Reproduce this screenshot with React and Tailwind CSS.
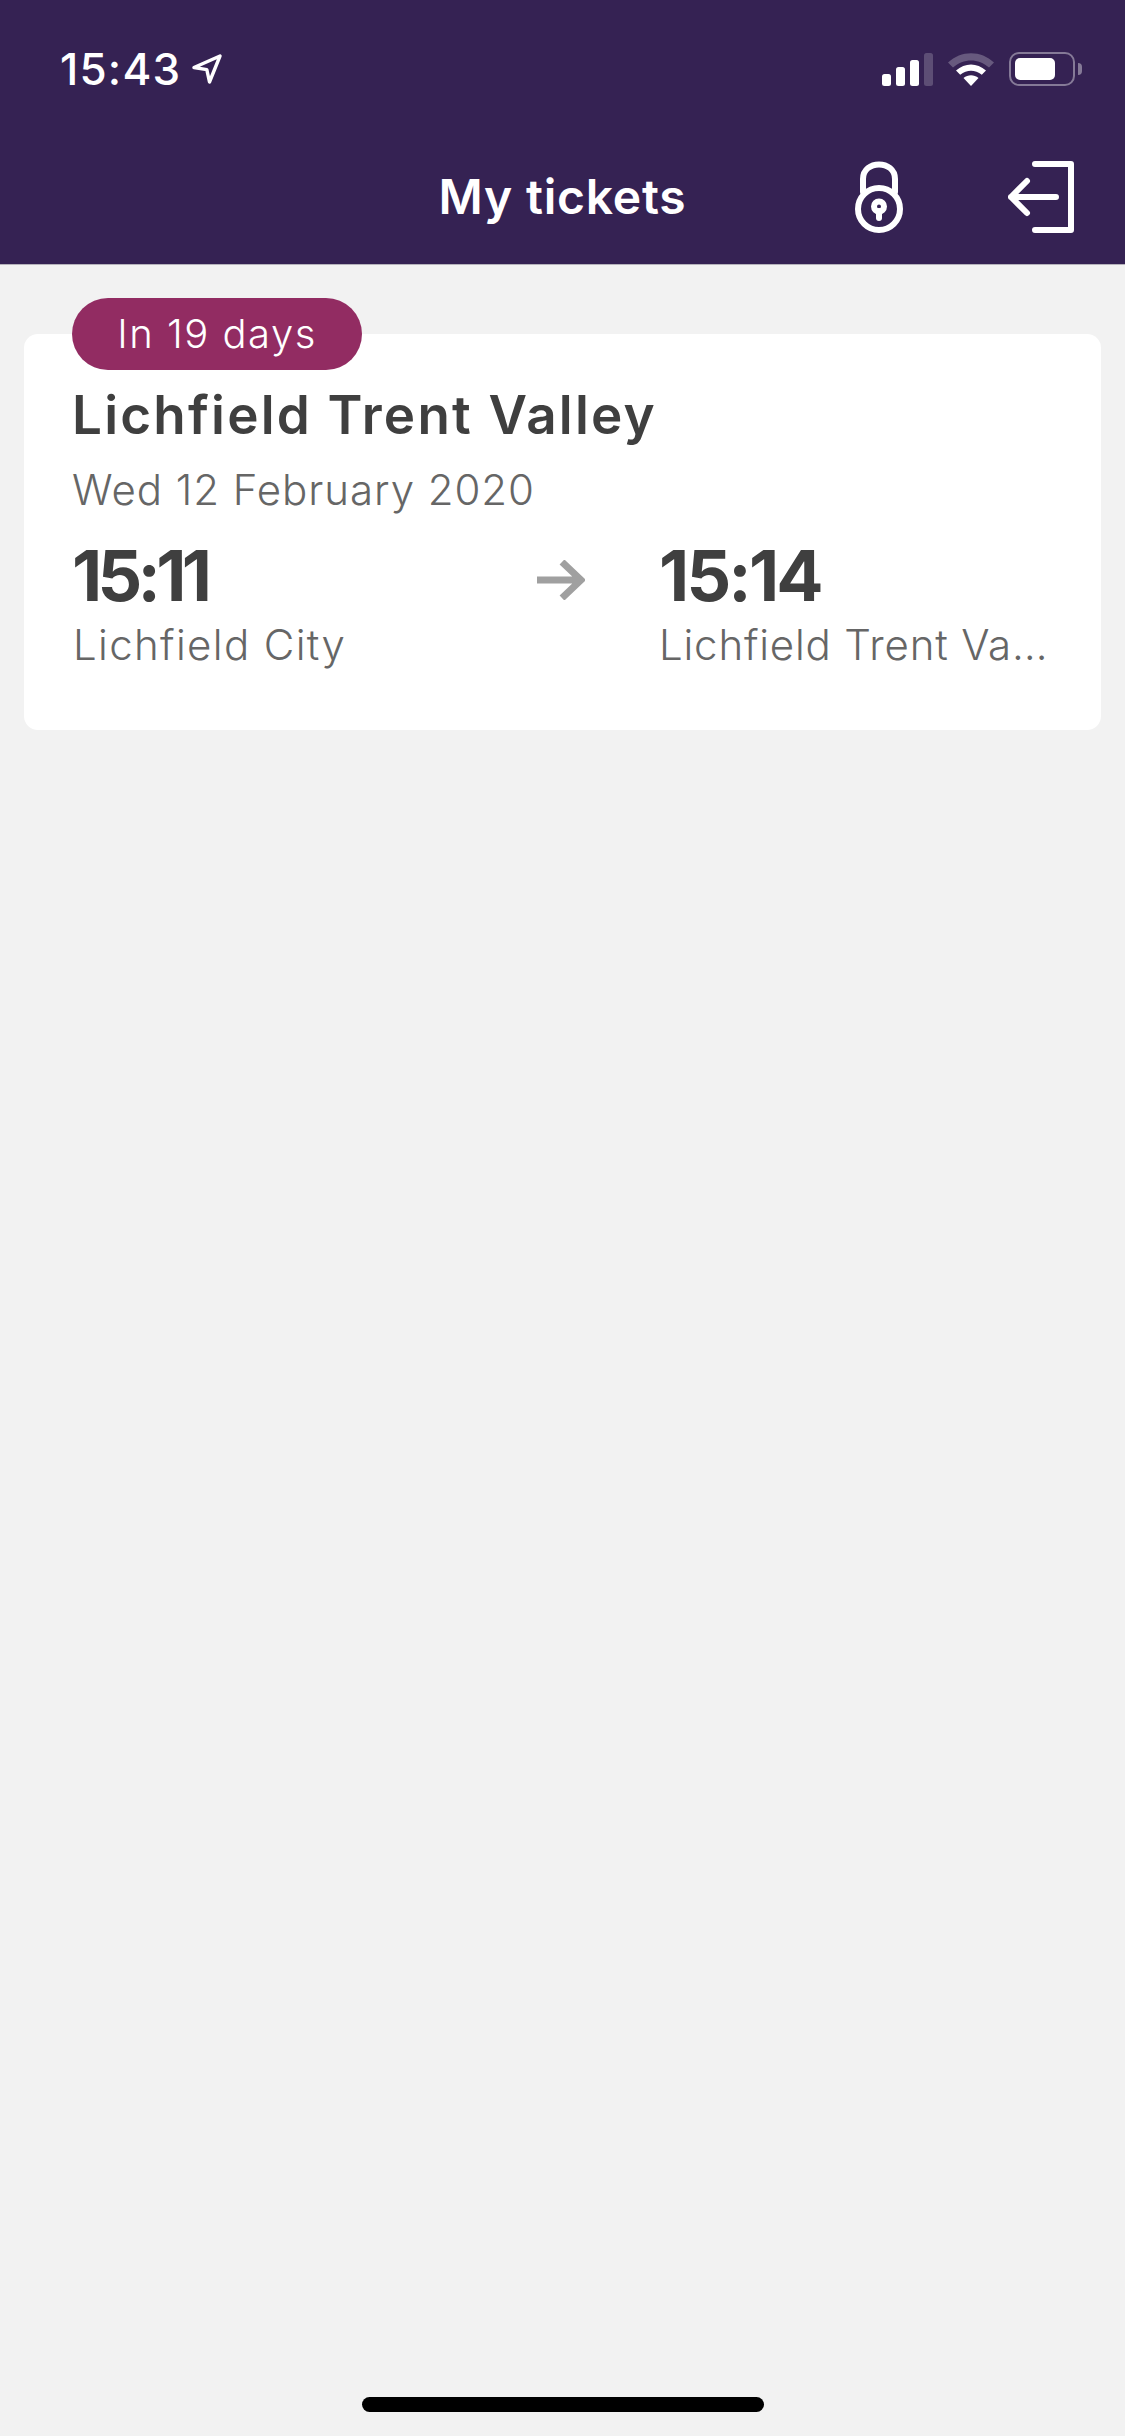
import React from 'react';

const FONT = 'font-["Inter",sans-serif]';

function LocationArrow() {
  return (
    <svg width="30" height="30" viewBox="0 0 30 30" fill="none" stroke="white" strokeWidth="3.4" strokeLinejoin="round">
      <path d="M2 13.5 L28 2 L17.5 28 L14.8 15.6 Z" />
    </svg>
  );
}

function SignalBars() {
  return (
    <svg width="51" height="33" viewBox="0 0 51 33">
      <rect x="0" y="21" width="9" height="12" rx="2.5" fill="white" />
      <rect x="14" y="14" width="9" height="19" rx="2.5" fill="white" />
      <rect x="28" y="7" width="9" height="26" rx="2.5" fill="white" />
      <rect x="42" y="0" width="9" height="33" rx="2.5" fill="white" fillOpacity="0.2" />
    </svg>
  );
}

function Wifi() {
  return (
    <svg width="46" height="33" viewBox="0 0 46 33">
      <path d="M0 9.5 C13 -3 33 -3 46 9.5 L41 14.5 C30.500 5 15.500 5 5 14.500 Z" fill="white" fillOpacity="0.25" />
      <path d="M8 17.500 C17 9.500 29 9.500 38 17.500 L33.800 21.800 C27 16.300 19 16.300 12.200 21.800 Z" fill="white" />
      <path d="M15.500 25 C20 21.300 26 21.300 30.500 25 L23 33 Z" fill="white" />
    </svg>
  );
}

function Battery() {
  return (
    <div className="flex items-center gap-[3px]">
      <div className="flex h-[34px] w-[66px] items-center rounded-[10px] border-[2px] border-white/40 pl-[4px]">
        <div className="h-[22px] w-[40px] rounded-[5px] bg-white" />
      </div>
      <div className="h-[12px] w-[4px] rounded-r-full bg-white/40" />
    </div>
  );
}

function LockIcon() {
  return (
    <svg width="48" height="72" viewBox="0 0 48 72" fill="none" stroke="white" strokeWidth="6" strokeLinecap="round">
      <path d="M8 31 V18 C8 -1.500 40 -1.500 40 18 V31" />
      <circle cx="24" cy="48" r="21" />
      <circle cx="24" cy="45.500" r="5" />
      <path d="M24 50 V57" />
    </svg>
  );
}

function ExitIcon() {
  return (
    <svg width="66" height="72" viewBox="0 0 66 72" fill="none" stroke="white" strokeWidth="6" strokeLinecap="round" strokeLinejoin="round">
      <path d="M27 3 H63 V69 H27" />
      <path d="M48 36 H3 M19 20 L3 36 L19 52" />
    </svg>
  );
}

function RouteArrow() {
  return (
    <svg width="48" height="40" viewBox="0 0 48 40" fill="none" stroke="#a0a0a0" strokeWidth="7">
      <path d="M0 20 H44 M25 2 L44 20 L25 38" />
    </svg>
  );
}

export default function App() {
  return (
    <div className={`${FONT} flex min-h-[2436px] flex-col bg-[#f2f2f2]`}>
      <header className="h-[265px] border-b border-[#b5b2bb] bg-[#352253] text-white">
        <div className="flex h-[138px] items-start justify-between pl-[60px] pr-[43px] pt-[52px]">
          <div className="flex items-center gap-[11px]">
            <span className="text-[44px] leading-[34px] font-medium tracking-[1.2px]">15:43</span>
            <LocationArrow />
          </div>
          <div className="flex items-center gap-[15px]">
            <SignalBars />
            <Wifi />
            <Battery />
          </div>
        </div>
        <div className="relative flex h-[72px] items-center justify-center pt-[46px]">
          <h1 className="text-[48px] leading-none font-semibold tracking-[0.8px]">My tickets</h1>
          <div className="absolute right-[51px] top-[23px] flex items-start gap-[105px]">
            <LockIcon />
            <ExitIcon />
          </div>
        </div>
      </header>

      <main className="px-[24px] pt-[69px]">
        <div className="relative flex h-[396px] flex-col rounded-[14px] bg-white pl-[48px] pr-[48px] pt-[51px]">
          <div className="absolute left-[48px] top-[-36px] flex h-[72px] w-[290px] items-center justify-center rounded-[36px] bg-[#922c62] text-[40px] leading-none font-light tracking-[1.5px] text-white">
            In 19 days
          </div>
          <h2 className="text-[53px] leading-[60px] font-semibold tracking-[2.2px] text-[#3f3f3f]">Lichfield Trent Valley</h2>
          <p className="mt-[20px] text-[42px] leading-[50px] font-light tracking-[0.95px] text-[#666666]">Wed 12 February 2020</p>
          <div className="mt-[25px] flex">
            <div className="w-[465px]">
              <div className="text-[70px] leading-[72px] font-bold tracking-[-4.7px] text-[#3f3f3f]">15:11</div>
              <div className="mt-[8px] pl-[1px] text-[42px] leading-[50px] font-light tracking-[1.35px] text-[#666666]">Lichfield City</div>
            </div>
            <div className="w-[122px] pt-[20px]">
              <RouteArrow />
            </div>
            <div className="min-w-0 flex-1">
              <div className="text-[70px] leading-[72px] font-bold tracking-[-2.8px] text-[#3f3f3f]">15:14</div>
              <div className="mt-[8px] truncate text-[42px] leading-[50px] font-light tracking-[0.8px] text-[#666666]">Lichfield Trent Valley</div>
            </div>
          </div>
        </div>
      </main>

      <div className="mt-auto flex justify-center pb-[24px]">
        <div className="h-[15px] w-[402px] rounded-[8px] bg-black" />
      </div>
    </div>
  );
}
